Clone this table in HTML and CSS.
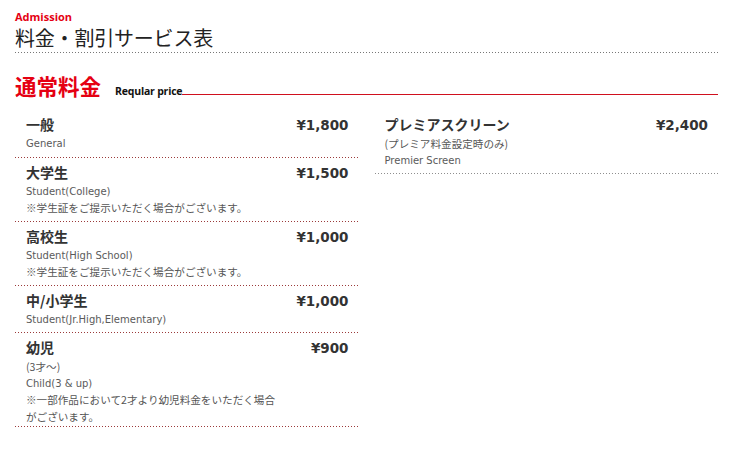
FILE: index.html
```html
<!DOCTYPE html>
<html lang="ja">
<head>
<meta charset="utf-8">
<title>料金・割引サービス表</title>
<link rel="stylesheet" href="styles.css">
</head>
<body>
<div class="page">
  <header class="page-head">
    <p class="page-en">Admission</p>
    <h1 class="page-title">料金・割引サービス表</h1>
  </header>

  <section class="section">
    <h2 class="sec-head">
      <span class="sec-title">通常料金</span>
      <span class="sec-en">Reqular price</span>
      <span class="sec-rule"></span>
    </h2>

    <div class="cols">
      <ul class="list list-left">
        <li class="item">
          <div class="row"><span class="name">一般</span><span class="price">¥1,800</span></div>
          <p class="note note-en">General</p>
        </li>
        <li class="item">
          <div class="row"><span class="name">大学生</span><span class="price">¥1,500</span></div>
          <p class="note note-en">Student(College)</p>
          <p class="note">※学生証をご提示いただく場合がございます。</p>
        </li>
        <li class="item">
          <div class="row"><span class="name">高校生</span><span class="price">¥1,000</span></div>
          <p class="note note-en">Student(High School)</p>
          <p class="note">※学生証をご提示いただく場合がございます。</p>
        </li>
        <li class="item">
          <div class="row"><span class="name">中/小学生</span><span class="price">¥1,000</span></div>
          <p class="note note-en">Student(Jr.High,Elementary)</p>
        </li>
        <li class="item item-tight">
          <div class="row"><span class="name">幼児</span><span class="price">¥900</span></div>
          <p class="note">(3才～)</p>
          <p class="note note-en">Child(3 &amp; up)</p>
          <p class="note">※一部作品において2才より幼児料金をいただく場合<br>がございます。</p>
        </li>
      </ul>
      <ul class="list list-right">
        <li class="item">
          <div class="row"><span class="name">プレミアスクリーン</span><span class="price">¥2,400</span></div>
          <p class="note">(プレミア料金設定時のみ)</p>
          <p class="note note-en">Premier Screen</p>
        </li>
      </ul>
    </div>
  </section>
</div>
</body>
</html>
```
FILE: styles.css
```css
* { box-sizing: border-box; }
html, body { margin: 0; padding: 0; background: #fff; }
body {
  font-family: "Noto Sans CJK JP", "Open Sans", sans-serif;
  color: #333;
}
.page {
  width: 703px;
  margin-left: 15px;
  padding-top: 10px;
}
.page-head {
  padding-bottom: 2px;
  background-image: linear-gradient(to right, #777 1px, transparent 1px);
  background-size: 3px 1px;
  background-repeat: repeat-x;
  background-position: 0 100%;
}
.page-en {
  margin: 0;
  font-family: "Open Sans", sans-serif;
  font-weight: 700;
  font-size: 11px;
  line-height: 14px;
  color: #e50012;
}
.page-title {
  margin: 1px 0 0;
  font-weight: 400;
  font-size: 20px;
  line-height: 26px;
  color: #222;
  letter-spacing: -0.2px;
}
.section { margin-top: 19px; }
.sec-head {
  margin: 0;
  display: flex;
  align-items: baseline;
}
.sec-title {
  font-size: 21.5px;
  line-height: 28px;
  font-weight: 700;
  color: #e50012;
}
.sec-en {
  margin-left: 14px;
  font-family: "Open Sans", sans-serif;
  font-weight: 700;
  font-size: 10.5px;
  color: #111;
  letter-spacing: -0.2px;
}
.sec-rule {
  flex: 1;
  height: 0;
  border-bottom: 1px solid #d0101e;
}
.cols {
  margin-top: 10px;
  display: grid;
  grid-template-columns: 1fr 1fr;
  column-gap: 16px;
  align-items: start;
}
.list { list-style: none; margin: 0; padding: 0; }
.item {
  padding: 4px 10px 5px 11px;
  background-repeat: repeat-x;
  background-size: 3px 1px;
  background-position: 0 100%;
  background-image: linear-gradient(to right, #8e8e8e 1px, transparent 1px);
}
.list-right .item { padding-left: 10px; }
.list-left .item {
  background-image: linear-gradient(to right, #9b3a3a 1px, transparent 1px);
}
.item-tight { padding-bottom: 2px; }
.row {
  display: flex;
  justify-content: space-between;
  align-items: baseline;
  line-height: 21px;
}
.name {
  font-size: 14px;
  font-weight: 700;
  color: #333;
}
.price {
  font-family: "DejaVu Sans", sans-serif;
  font-size: 13.5px;
  font-weight: 700;
  color: #333;
}
.note {
  margin: 0;
  font-family: "Noto Sans CJK JP", sans-serif;
  font-size: 10.6px;
  line-height: 16.5px;
  color: #555;
}
.note-en {
  font-family: "DejaVu Sans", sans-serif;
  font-size: 10px;
  color: #5a5a5a;
}
```
